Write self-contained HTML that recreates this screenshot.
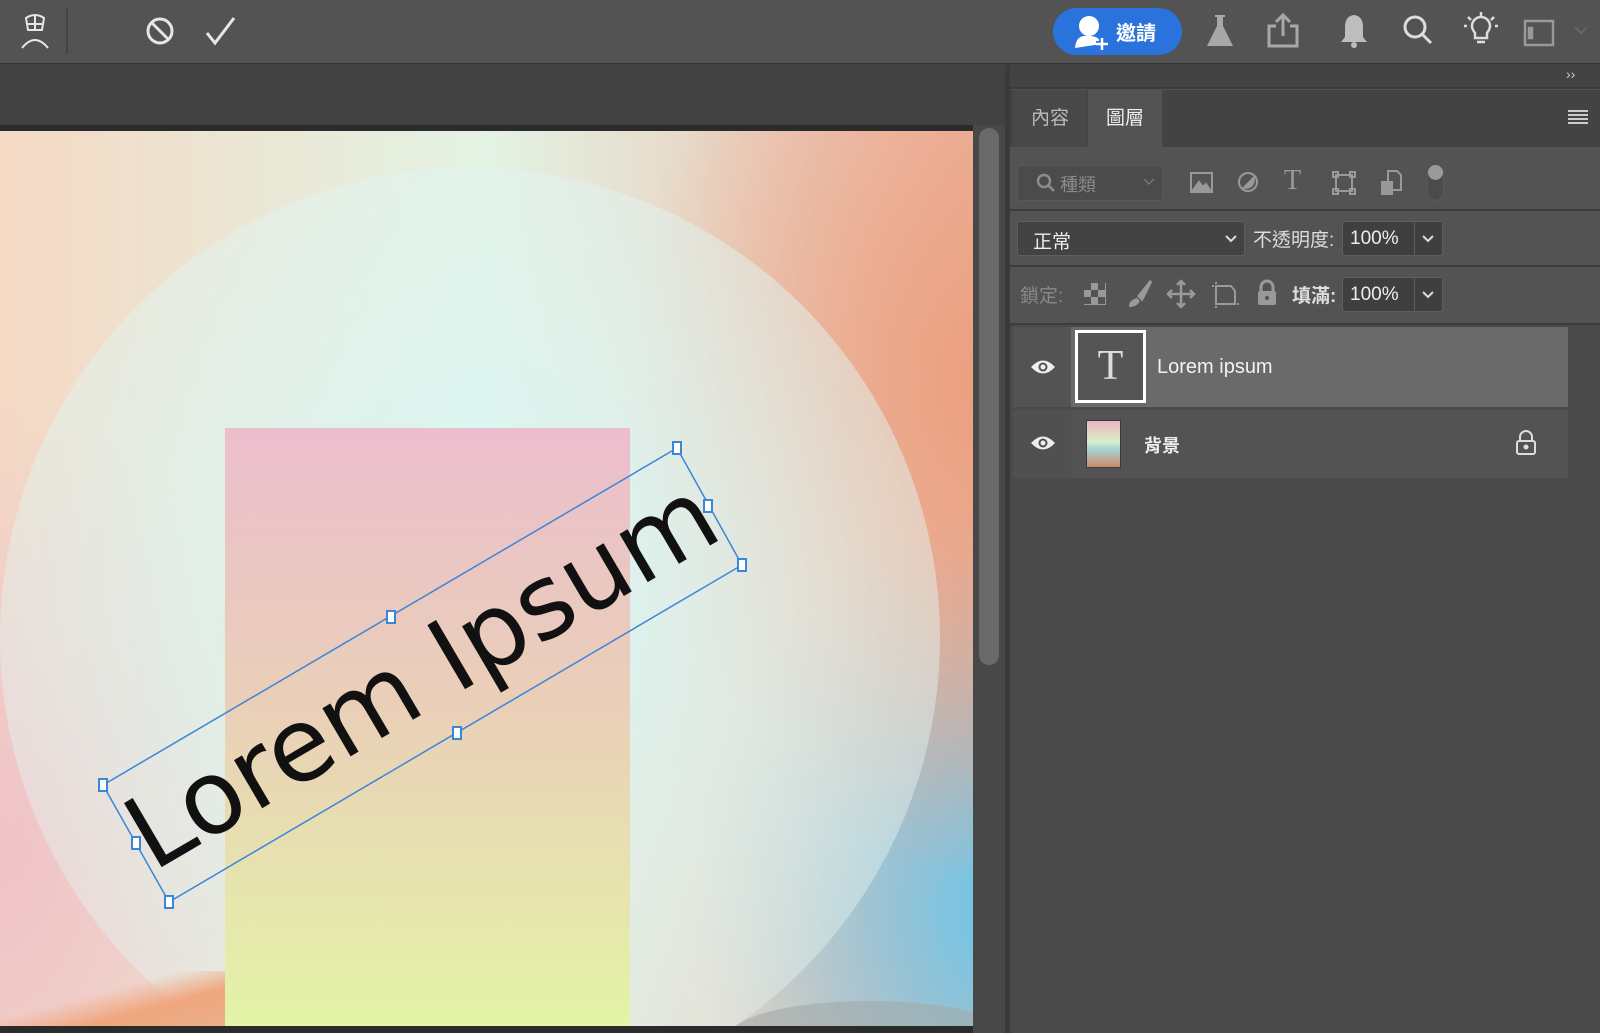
<!DOCTYPE html>
<html><head><meta charset="utf-8"><style>
*{margin:0;padding:0;box-sizing:border-box}
html,body{width:1600px;height:1033px;overflow:hidden}
body{background:#424242;font-family:"Liberation Sans","Noto Sans CJK TC",sans-serif;position:relative;color:#ddd}
.abs{position:absolute}
.top{left:0;top:0;width:1600px;height:64px;background:#535353;border-bottom:1px solid #333}
svg{position:absolute;overflow:visible}
.canvas{left:0;top:131px;width:973px;height:895px;overflow:hidden;
background:
radial-gradient(ellipse 300px 450px at 0px 720px,#efc2c8 0%,rgba(239,194,200,0) 100%),
radial-gradient(ellipse 350px 500px at 980px 250px,#eba07f 0%,rgba(235,160,127,0) 100%),
radial-gradient(ellipse 300px 400px at 990px 780px,#6ec5e8 0%,rgba(110,197,232,0) 100%),
linear-gradient(90deg,#f4d9c4,#e3f3e4 50%,#eeb6a5);}
.circle{left:0;top:37px;width:940px;height:940px;border-radius:50%;
background:radial-gradient(circle at 50% 45%,rgba(216,245,246,.9) 0%,rgba(222,244,240,.7) 40%,rgba(240,240,235,.2) 100%)}
.rect{left:225px;top:297px;width:405px;height:610px;background:linear-gradient(#ebbecd,#eacfb8 45%,#e3f5a6)}
.panel{left:1010px;top:65px;width:590px;height:968px;background:#535353}
.sep{left:1010px;height:2px;width:590px;background:#3d3d3d}
.inp{background:#3f3f3f;border:1px solid #5e5e5e;border-radius:3px;color:#eee;font-size:19px}
.h{width:10px;height:14px;background:#fff;border:2px solid #3a86d8;position:absolute;margin:-7px 0 0 -5px}
</style></head><body>
<div class="abs top"></div>
<svg style="left:18px;top:12px" width="34" height="38" viewBox="0 0 34 38" fill="none" stroke="#e6e6e6" stroke-width="2"><path d="M8 6 Q17 0 26 6 L24 18 H10 Z M10 12 H24 M17 4 V18"/><path d="M4 36 Q17 20 30 36"/></svg>
<div class="abs" style="left:66px;top:8px;width:2px;height:46px;background:#444"></div>
<svg style="left:145px;top:16px" width="30" height="30" fill="none" stroke="#e6e6e6" stroke-width="3"><circle cx="15" cy="15" r="12"/><path d="M7 7 L23 23"/></svg>
<svg style="left:205px;top:16px" width="32" height="30" fill="none" stroke="#e6e6e6" stroke-width="3"><path d="M2 17 L10 27 L29 2"/></svg>
<div class="abs" style="left:1053px;top:8px;width:129px;height:47px;border-radius:24px;background:#2a72dc"></div>
<svg style="left:1074px;top:14px" width="34" height="36"><circle cx="15" cy="12" r="10" fill="#fff"/><path d="M1 34 Q2 20 15 22 Q26 22 27 30" fill="#fff"/><path d="M22 30 H34 M28 24 V36" stroke="#2a72dc" stroke-width="6"/><path d="M22 30 H34 M28 24 V36" stroke="#fff" stroke-width="2.5"/></svg>
<div class="abs" style="left:1116px;top:17px;font-size:20px;color:#fff;font-weight:bold">邀請</div>
<svg style="left:1205px;top:13px" width="30" height="36" fill="#a8a8a8"><path d="M10 2 H20 V4 H18 V13 L28 33 H2 L12 13 V4 H10 Z"/></svg>
<svg style="left:1266px;top:12px" width="34" height="36" fill="none" stroke="#a8a8a8" stroke-width="3"><path d="M10 14 H3 V34 H31 V14 H24 M17 24 V3 M10 10 L17 3 L24 10"/></svg>
<svg style="left:1339px;top:13px" width="30" height="36" fill="#bdbdbd"><path d="M15 2 Q24 3 24 14 V24 L28 29 H2 L6 24 V14 Q6 3 15 2 Z"/><circle cx="15" cy="32" r="3"/></svg>
<svg style="left:1402px;top:14px" width="32" height="34" fill="none" stroke="#ddd" stroke-width="3"><circle cx="13" cy="13" r="10"/><path d="M20 20 L29 29"/></svg>
<svg style="left:1464px;top:11px" width="34" height="38" fill="none" stroke="#ddd" stroke-width="2.5"><path d="M11 22 Q8 18 8 15 A9 9 0 0 1 26 15 Q26 18 23 22 V27 H11 Z M13 31 H21 M17 1 V5 M4 6 L7 9 M30 6 L27 9 M0 15 H3 M31 15 H34"/></svg>
<svg style="left:1524px;top:20px" width="32" height="26" fill="none" stroke="#999" stroke-width="2.5"><rect x="1" y="1" width="28" height="24"/><rect x="5" y="8" width="3" height="10" fill="#999"/></svg>
<svg style="left:1574px;top:26px" width="14" height="10" fill="none" stroke="#666" stroke-width="2"><path d="M1 1 L7 7 L13 1"/></svg>

<div class="abs" style="left:0;top:125px;width:973px;height:6px;background:#2b2b2b"></div>
<div class="abs canvas">
 <div class="abs circle"></div>
 <div class="abs rect"></div>
 <div class="abs" style="left:0;top:840px;width:225px;height:60px;background:linear-gradient(165deg,rgba(240,166,126,0) 40%,#f0a67e 65%,#e9b08a)"></div>
 <div class="abs" style="left:730px;top:870px;width:280px;height:70px;border-radius:50%;background:rgba(160,170,170,.6)"></div>
</div>
<div class="abs" style="left:0;top:1026px;width:973px;height:7px;background:#2b2b2b"></div>
<svg style="left:0;top:0" width="1000" height="1000"><polygon points="103,785 677,448 742,565 169,902" fill="none" stroke="#3a86d8" stroke-width="1.5"/></svg>
<div class="abs" style="left:89px;top:608px;width:666px;height:134px;transform:rotate(-30.4deg);font-family:'DejaVu Sans','Liberation Sans',sans-serif;font-size:102px;line-height:134px;text-align:center;color:#111;white-space:nowrap">Lorem Ipsum</div>
<div class="h" style="left:103px;top:785px"></div><div class="h" style="left:677px;top:448px"></div>
<div class="h" style="left:742px;top:565px"></div><div class="h" style="left:169px;top:902px"></div>
<div class="h" style="left:391px;top:617px"></div><div class="h" style="left:457px;top:733px"></div>
<div class="h" style="left:708px;top:506px"></div><div class="h" style="left:136px;top:843px"></div>
<div class="abs" style="left:973px;top:125px;width:32px;height:908px;background:#484848"></div>
<div class="abs" style="left:979px;top:128px;width:20px;height:537px;border-radius:10px;background:#6a6a6a"></div>
<div class="abs" style="left:1005px;top:65px;width:5px;height:968px;background:#3a3a3a"></div>

<div class="abs panel"></div>
<div class="abs" style="left:1010px;top:65px;width:590px;height:24px;background:#434343;border-bottom:2px solid #3a3a3a"></div>
<div class="abs" style="left:1566px;top:66px;font-size:14px;color:#ccc">››</div>
<div class="abs" style="left:1010px;top:90px;width:590px;height:57px;background:#434343"></div>
<div class="abs" style="left:1013px;top:90px;width:74px;height:57px;background:#484848;font-size:19px;color:#bbb;text-align:center;line-height:57px">內容</div>
<div class="abs" style="left:1088px;top:90px;width:74px;height:57px;background:#535353;font-size:19px;color:#eee;text-align:center;line-height:57px">圖層</div>
<svg style="left:1568px;top:110px" width="20" height="14" stroke="#ccc" stroke-width="2"><path d="M0 1 H20 M0 5 H20 M0 9 H20 M0 13 H20"/></svg>
<div class="abs" style="left:1017px;top:165px;width:146px;height:36px;background:#4b4b4b;border:1px solid #5a5a5a;border-radius:3px"></div>
<svg style="left:1036px;top:173px" width="20" height="20" fill="none" stroke="#8c8c8c" stroke-width="2.5"><circle cx="8" cy="8" r="6"/><path d="M12 12 L18 18"/></svg>
<div class="abs" style="left:1060px;top:171px;font-size:18px;color:#8a8a8a">種類</div>
<svg style="left:1143px;top:178px" width="12" height="8" fill="none" stroke="#777" stroke-width="1.5"><path d="M1 1 L6 6 L11 1"/></svg>
<svg style="left:1190px;top:172px" width="24" height="22" fill="none" stroke="#999" stroke-width="2"><rect x="1" y="1" width="21" height="19"/><path d="M3 18 L9 10 L13 15 L16 12 L20 18 Z" fill="#999"/></svg>
<svg style="left:1237px;top:171px" width="22" height="22"><circle cx="11" cy="11" r="9" fill="none" stroke="#999" stroke-width="2"/><path d="M17 5 A9 9 0 0 1 5 17 Z" fill="#999"/></svg>
<div class="abs" style="left:1284px;top:165px;font-family:'Liberation Serif',serif;font-size:28px;color:#999">T</div>
<svg style="left:1332px;top:171px" width="24" height="24" fill="none" stroke="#999" stroke-width="2"><rect x="4" y="4" width="16" height="16"/><rect x="1" y="1" width="5" height="5"/><rect x="18" y="1" width="5" height="5"/><rect x="1" y="18" width="5" height="5"/><rect x="18" y="18" width="5" height="5"/></svg>
<svg style="left:1380px;top:170px" width="22" height="26" fill="#999"><path d="M8 1 H17 L21 5 V20 H8 Z" fill="none" stroke="#999" stroke-width="2"/><rect x="1" y="11" width="12" height="14"/></svg>
<div class="abs" style="left:1427px;top:165px;width:17px;height:36px;border-radius:9px;border:1px solid #5a5a5a;background:#4b4b4b"></div>
<div class="abs" style="left:1428px;top:165px;width:15px;height:15px;border-radius:50%;background:#9a9a9a"></div>
<div class="abs sep" style="top:209px"></div>
<div class="abs inp" style="left:1017px;top:221px;width:228px;height:35px;background:#434343;padding:5px 15px">正常</div>
<svg style="left:1225px;top:235px" width="12" height="8" fill="none" stroke="#ddd" stroke-width="2"><path d="M1 1 L6 6 L11 1"/></svg>
<div class="abs" style="left:1253px;top:225px;font-size:19px;color:#ddd">不透明度:</div>
<div class="abs inp" style="left:1342px;top:221px;width:101px;height:35px;padding:6px 7px">100%</div>
<div class="abs" style="left:1414px;top:222px;width:1px;height:33px;background:#5e5e5e"></div>
<svg style="left:1422px;top:235px" width="12" height="8" fill="none" stroke="#ddd" stroke-width="2"><path d="M1 1 L6 6 L11 1"/></svg>
<div class="abs sep" style="top:265px"></div>
<div class="abs" style="left:1020px;top:281px;font-size:19px;color:#888">鎖定:</div>
<svg style="left:1084px;top:283px" width="22" height="22"><rect width="22" height="22" fill="#999"/><rect x="0" y="0" width="7" height="7" fill="#535353"/><rect x="14" y="0" width="7" height="7" fill="#535353"/><rect x="7" y="7" width="7" height="7" fill="#535353"/><rect x="0" y="14" width="7" height="7" fill="#535353"/><rect x="14" y="14" width="7" height="7" fill="#535353"/></svg>
<svg style="left:1127px;top:280px" width="26" height="28" fill="#999"><path d="M24 1 L12 16 L15 19 Z" stroke="#999" stroke-width="3"/><path d="M10 18 Q2 20 2 27 Q10 27 13 21 Z"/></svg>
<svg style="left:1167px;top:280px" width="28" height="28" fill="none" stroke="#999" stroke-width="2.5"><path d="M14 1 V27 M1 14 H27 M10 5 L14 1 L18 5 M10 23 L14 27 L18 23 M5 10 L1 14 L5 18 M23 10 L27 14 L23 18"/></svg>
<svg style="left:1211px;top:282px" width="28" height="26" fill="none" stroke="#999" stroke-width="2"><path d="M5 4 H20 L24 9 V22 H5 Z"/><path d="M1 4 H3 M5 0 V2 M26 22 H28 M5 24 V26"/></svg>
<svg style="left:1257px;top:280px" width="20" height="26" fill="#999"><path d="M4 11 V7 A6 6 0 0 1 16 7 V11" fill="none" stroke="#999" stroke-width="3"/><rect x="1" y="11" width="18" height="14" rx="2"/><circle cx="10" cy="18" r="2" fill="#535353"/></svg>
<div class="abs" style="left:1292px;top:281px;font-size:19px;color:#ddd;font-weight:bold">填滿:</div>
<div class="abs inp" style="left:1342px;top:277px;width:101px;height:35px;padding:6px 7px">100%</div>
<div class="abs" style="left:1414px;top:278px;width:1px;height:33px;background:#5e5e5e"></div>
<svg style="left:1422px;top:291px" width="12" height="8" fill="none" stroke="#ddd" stroke-width="2"><path d="M1 1 L6 6 L11 1"/></svg>
<div class="abs sep" style="top:323px"></div>
<div class="abs" style="left:1010px;top:325px;width:590px;height:708px;background:#4a4a4a"></div>
<div class="abs" style="left:1013px;top:327px;width:555px;height:80px;background:#535353"></div>
<div class="abs" style="left:1071px;top:327px;width:497px;height:80px;background:#6a6a6a"></div>
<div class="abs" style="left:1075px;top:330px;width:71px;height:73px;border:3px solid #fff;background:#555;font-family:'Liberation Serif',serif;font-size:42px;color:#ddd;text-align:center;line-height:66px">T</div>
<div class="abs" style="left:1157px;top:356px;font-size:20px;color:#f2f2f2">Lorem ipsum</div>
<div class="abs" style="left:1013px;top:410px;width:555px;height:68px;background:#505050"></div>
<div class="abs" style="left:1071px;top:410px;width:497px;height:68px;background:#535353"></div>
<div class="abs" style="left:1086px;top:420px;width:35px;height:48px;border:1px solid #3a3a3a;background:linear-gradient(#e9b7c0,#dcefc7 45%,#a8d7d9 60%,#c98a64)"></div>
<div class="abs" style="left:1144px;top:432px;font-size:18px;color:#eee;font-weight:bold">背景</div>
<svg style="left:1515px;top:430px" width="22" height="26" fill="none" stroke="#ddd" stroke-width="2"><path d="M5 11 V7 A6 6 0 0 1 17 7 V11"/><rect x="2" y="11" width="18" height="13" rx="2"/><circle cx="11" cy="17" r="1.5" fill="#ddd"/></svg>
<svg style="left:1030px;top:358px" width="26" height="18"><path d="M1 9 Q13 -4 25 9 Q13 22 1 9 Z" fill="#eee"/><circle cx="13" cy="9" r="4.5" fill="#535353"/><circle cx="13" cy="9" r="2.5" fill="#eee"/></svg>
<svg style="left:1030px;top:434px" width="26" height="18"><path d="M1 9 Q13 -4 25 9 Q13 22 1 9 Z" fill="#eee"/><circle cx="13" cy="9" r="4.5" fill="#505050"/><circle cx="13" cy="9" r="2.5" fill="#eee"/></svg>
</body></html>
